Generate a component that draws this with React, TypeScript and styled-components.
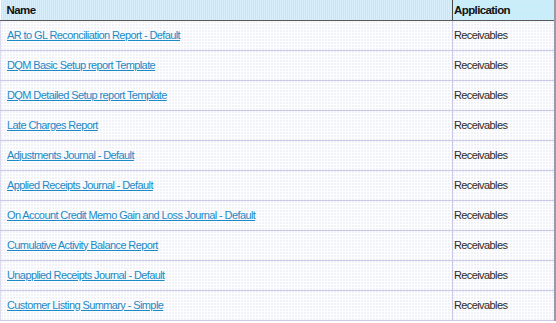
import React from "react";
import styled, { createGlobalStyle } from "styled-components";

const Global = createGlobalStyle`
  html, body { margin: 0; padding: 0; background: #ffffff; }
  body { font-family: "Liberation Sans", Arial, sans-serif; }
`;

const Table = styled.table`
  width: 555px;
  border-collapse: collapse;
  table-layout: fixed;
  font-family: "Liberation Sans", Arial, sans-serif;
  font-size: 11px;
  letter-spacing: -0.6px;
  border-right: 2px solid #9a9aa8;
`;

const Col = styled.col<{ $w: number }>`
  width: ${(p) => p.$w}px;
`;

const HeadCell = styled.th<{ $last?: boolean }>`
  height: 20px;
  padding: 0 0 0 ${(p) => (p.$last ? 1 : 6)}px;
  text-align: left;
  font-weight: bold;
  font-size: 11.5px;
  color: #111;
  background-color: #c4ecf8;
  background-image: linear-gradient(to right, transparent 1px, #d8eefa 1px),
    linear-gradient(to bottom, transparent 1px, #b4ecfa 1px);
  background-size: 2px 2px;
  border-bottom: 1px solid #5a5a5a;
  border-right: ${(p) => (p.$last ? "none" : "1px solid #4a4a4a")};
  vertical-align: middle;
`;

const Row = styled.tr`
  height: 30px;
`;

const Cell = styled.td<{ $last?: boolean }>`
  padding: 0 0 2px ${(p) => (p.$last ? 1 : 6)}px;
  height: 27px;
  border-bottom: 1px solid #cacae8;
  border-right: ${(p) => (p.$last ? "none" : "1px solid #cacae8")};
  border-left: ${(p) => (p.$last ? "none" : "1px solid #dcdcee")};
  background-color: #c4c4e0;
  background-image: linear-gradient(to right, transparent 1px, #ffffff 1px),
    linear-gradient(to bottom, transparent 1px, #ffffff 1px);
  background-size: 3px 3px;
  color: #2a2a2a;
  vertical-align: middle;
  white-space: nowrap;
`;

const Link = styled.a`
  color: #1c8ac6;
  text-decoration: underline;
  cursor: pointer;
`;

const rows = [
  "AR to GL Reconciliation Report - Default",
  "DQM Basic Setup report Template",
  "DQM Detailed Setup report Template",
  "Late Charges Report",
  "Adjustments Journal - Default",
  "Applied Receipts Journal - Default",
  "On Account Credit Memo Gain and Loss Journal - Default",
  "Cumulative Activity Balance Report",
  "Unapplied Receipts Journal - Default",
  "Customer Listing Summary - Simple",
];

export default function App() {
  return (
    <>
      <Global />
      <Table>
        <colgroup>
          <Col $w={452} />
          <Col $w={102} />
        </colgroup>
        <thead>
          <tr>
            <HeadCell>Name</HeadCell>
            <HeadCell $last>Application</HeadCell>
          </tr>
        </thead>
        <tbody>
          {rows.map((r) => (
            <Row key={r}>
              <Cell>
                <Link>{r}</Link>
              </Cell>
              <Cell $last>Receivables</Cell>
            </Row>
          ))}
        </tbody>
      </Table>
    </>
  );
}
